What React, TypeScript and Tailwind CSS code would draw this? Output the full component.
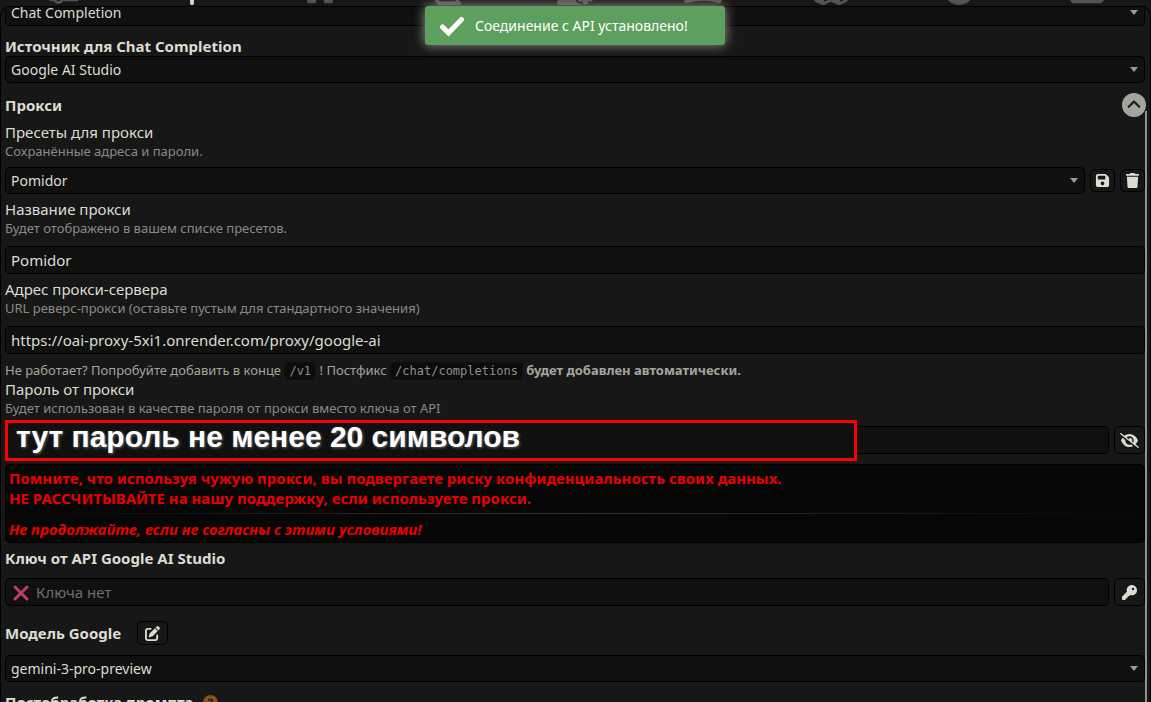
import React from 'react';
import {
  FaAddressCard,
  FaBookAtlas,
  FaChevronUp,
  FaCircleQuestion,
  FaCubes,
  FaEyeSlash,
  FaFaceSmile,
  FaFloppyDisk,
  FaFont,
  FaKey,
  FaPanorama,
  FaPenToSquare,
  FaPlug,
  FaSliders,
  FaTrash,
  FaUserGear,
} from 'react-icons/fa6';

const navItems = [
  { name: 'Настройки', Icon: FaSliders },
  { name: 'API', Icon: FaPlug, active: true },
  { name: 'Форматирование', Icon: FaFont },
  { name: 'Миры', Icon: FaBookAtlas },
  { name: 'Пользователь', Icon: FaUserGear },
  { name: 'Фон', Icon: FaPanorama },
  { name: 'Расширения', Icon: FaCubes },
  { name: 'Персона', Icon: FaFaceSmile },
  { name: 'Персонажи', Icon: FaAddressCard },
];

const inputClass =
  'block h-7 w-full min-w-0 rounded-[5px] border border-black bg-[#101010] px-[5px] text-[15px] text-[#dcdcd2] outline-none placeholder:text-[#6e6e6a]';

const codeClass =
  "rounded-[5px] border border-[#101010] bg-[#0c0c0c] px-1 py-px font-['DejaVu_Sans_Mono',monospace] text-[12px] leading-none text-[#8f8f89]";

const SelectField = ({ id, label, value }: { id: string; label?: string; value: string }) => (
  <div className="relative min-w-0 flex-1">
    <select
      id={id}
      aria-label={label}
      defaultValue={value}
      className="block h-[27px] w-full appearance-none rounded-[5px] border border-black bg-[#101010] px-[5px] text-[14px] text-[#dcdcd2] outline-none"
    >
      <option>{value}</option>
    </select>
    <svg viewBox="0 0 8 5" className="pointer-events-none absolute top-[11px] right-[7px] h-[5px] w-2 fill-[#999]">
      <path d="M0 0h8L4 5z" />
    </svg>
  </div>
);

const IconButton = ({ label, className, children }: { label: string; className: string; children: React.ReactNode }) => (
  <button
    type="button"
    aria-label={label}
    className={`flex shrink-0 items-center justify-center rounded-[5px] border border-black bg-[#171717] text-[#dcdcd2] ${className}`}
  >
    {children}
  </button>
);

const FieldLabel = ({ htmlFor, title, hint }: { htmlFor: string; title: string; hint: string }) => (
  <div>
    <label htmlFor={htmlFor} className="block leading-5">{title}</label>
    <small className="block text-[13px] leading-[18px] text-[#8a8a85]">{hint}</small>
  </div>
);

const App = () => {
  return (
    <div className="relative flex h-screen flex-col overflow-hidden bg-[#171717] font-['Noto_Sans',sans-serif] text-[15px] text-[#dcdcd2]">
      <nav className="flex h-1.5 shrink-0 items-end overflow-hidden pb-px">
        {navItems.map(({ name, Icon, active }) => (
          <button
            key={name}
            type="button"
            aria-label={name}
            className={`flex flex-1 justify-center ${active ? 'text-[#dcdcd2]' : 'text-[#53534f]'}`}
          >
            <Icon className="h-[30px] w-[38px]" />
          </button>
        ))}
      </nav>

      <main className="relative min-h-0 flex-1 overflow-hidden rounded-t-[10px] border border-b-0 border-black pr-[5px] pl-1">
        {/* Scrolled a little, so the first select is cut by the panel edge */}
        <div className="-mt-2 flex">
          <SelectField id="main-api" label="API" value="Chat Completion" />
        </div>

        <label htmlFor="source" className="mt-2.5 block leading-5 font-bold">Источник для Chat Completion</label>
        <div className="flex">
          <SelectField id="source" value="Google AI Studio" />
        </div>

        <div className="mt-2.5 flex h-6 items-center justify-between">
          <h4 className="font-bold">Прокси</h4>
          <button
            type="button"
            aria-label="Свернуть"
            className="-mr-px flex size-6 items-center justify-center rounded-full bg-[#a5a59e] text-[#171717]"
          >
            <FaChevronUp className="size-3.5 stroke-current [stroke-width:20]" />
          </button>
        </div>

        <div className="mt-[5px]">
          <FieldLabel htmlFor="preset" title="Пресеты для прокси" hint="Сохранённые адреса и пароли." />
          <div className="mt-[7px] flex items-center gap-[5px]">
            <SelectField id="preset" value="Pomidor" />
            <IconButton label="Сохранить" className="h-[23px] w-[25px]">
              <FaFloppyDisk className="size-[15px]" />
            </IconButton>
            <IconButton label="Удалить" className="h-[23px] w-[25px]">
              <FaTrash className="size-[15px]" />
            </IconButton>
          </div>
        </div>

        <div className="mt-[5px]">
          <FieldLabel htmlFor="proxy-name" title="Название прокси" hint="Будет отображено в вашем списке пресетов." />
          <input id="proxy-name" type="text" defaultValue="Pomidor" className={`mt-[9px] ${inputClass}`} />
        </div>

        <div className="mt-[5px]">
          <FieldLabel
            htmlFor="proxy-url"
            title="Адрес прокси-сервера"
            hint="URL реверс-прокси (оставьте пустым для стандартного значения)"
          />
          <input
            id="proxy-url"
            type="text"
            defaultValue="https://oai-proxy-5xi1.onrender.com/proxy/google-ai"
            className={`mt-[9px] ${inputClass}`}
          />
        </div>

        <p className="mt-[7px] text-[13px] leading-[18px] text-[#a5a59e]">
          Не работает? Попробуйте добавить в конце{' '}
          <code className={codeClass}>/v1</code>
          {' '}! Постфикс{' '}
          <code className={codeClass}>/chat/completions</code>
          {' '}<b>будет добавлен автоматически.</b>
        </p>

        <FieldLabel
          htmlFor="proxy-password"
          title="Пароль от прокси"
          hint="Будет использован в качестве пароля от прокси вместо ключа от API"
        />
        <div className="relative mt-[9px] flex gap-[5px]">
          <input id="proxy-password" type="text" className={inputClass} />
          <IconButton label="Показать пароль" className="h-7 w-[31px]">
            <FaEyeSlash className="h-[15px] w-[19px]" />
          </IconButton>
          <div className="absolute -top-1.5 left-0 h-[41px] w-[852px] max-w-full border-[3px] border-[#ff0000] bg-[#101010] pl-2 font-['Liberation_Sans',Arial,sans-serif] text-[30px] leading-7 font-bold whitespace-nowrap text-white [text-shadow:1px_1px_3px_#666]">
            тут пароль не менее 20 символов
          </div>
        </div>

        <div className="mt-2.5 rounded-[5px] border border-black bg-[#070707] p-[3px] leading-5 font-bold text-[#e60000]">
          <p>Помните, что используя чужую прокси, вы подвергаете риску конфиденциальность своих данных.</p>
          <p>НЕ РАССЧИТЫВАЙТЕ на нашу поддержку, если используете прокси.</p>
          <hr className="my-[5px] h-px border-0 bg-linear-to-r from-transparent via-[#333] to-transparent" />
          <p className="italic">Не продолжайте, если не согласны с этими условиями!</p>
        </div>

        <label htmlFor="api-key" className="mt-[5px] block leading-5 font-bold">Ключ от API Google AI Studio</label>
        <div className="mt-2.5 flex gap-[5px]">
          <div className="relative min-w-0 flex-1">
            <input id="api-key" type="text" placeholder="Ключа нет" className={`${inputClass} pl-[30px]`} />
            <svg viewBox="0 0 16 16" className="pointer-events-none absolute top-[7px] left-2 size-4 stroke-[#bd4060]">
              <path d="M2 2l12 12M14 2L2 14" strokeWidth="3" strokeLinecap="round" />
            </svg>
          </div>
          <IconButton label="Ключи" className="h-7 w-[31px]">
            <FaKey className="size-[15px]" />
          </IconButton>
        </div>

        <div className="mt-[15px] flex items-center gap-4 leading-5">
          <label htmlFor="model" className="font-bold">Модель Google</label>
          <IconButton label="Изменить модель" className="h-6 w-[31px]">
            <FaPenToSquare className="size-[15px]" />
          </IconButton>
        </div>
        <div className="mt-2.5 flex">
          <SelectField id="model" value="gemini-3-pro-preview" />
        </div>

        <div className="mt-2.5 flex items-center gap-2.5 leading-5">
          <h4 className="font-bold">Постобработка промпта</h4>
          <FaCircleQuestion className="size-[15px] text-[#8a5419]" />
        </div>

        <div className="absolute top-[104px] right-[3px] bottom-0 w-0.5 bg-[#929292]" />
      </main>

      <div className="pointer-events-none absolute inset-x-0 top-1.5 flex justify-center pr-px">
        <div
          role="status"
          className="flex h-[39px] w-[300px] items-center gap-[11px] rounded-[3px] bg-[#5d9f5d] pl-[15px] text-[14px] text-white shadow-[0_0_12px_#999]"
        >
          <svg viewBox="0 0 24 24" className="size-6 fill-none stroke-white">
            <path d="M2.5 13l6 6L21.500 5.500" strokeWidth="5" strokeLinecap="round" />
          </svg>
          <span>Соединение с API установлено!</span>
        </div>
      </div>
    </div>
  );
};

export default App;
